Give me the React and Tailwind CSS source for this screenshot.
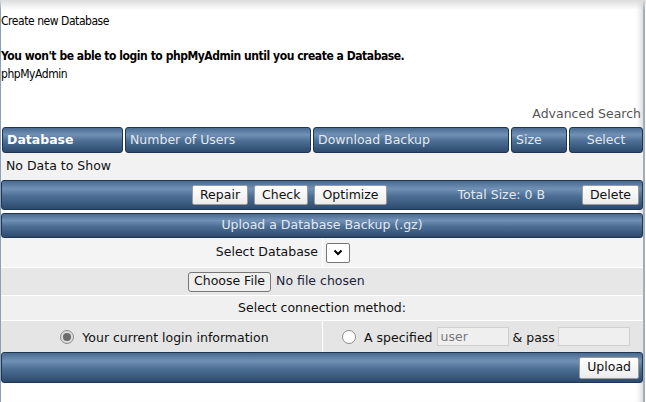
import React from 'react';

// blue bar gradient used by headers and action bars
const bar =
  'bg-[linear-gradient(to_bottom,#4a6b91_0%,#7090b4_28%,#4d6e94_55%,#2c4a6d_100%)] border border-[#1f3552] rounded-[3px]';

const Btn = ({ children, className = '' }) => (
  <button
    className={`h-[20px] px-[7px] border border-[#9a9a9a] rounded-[2px] bg-[linear-gradient(to_bottom,#ffffff,#ececec)] text-[#111] leading-none ${className}`}
  >
    {children}
  </button>
);

const Radio = ({ checked }) => (
  <span
    className={`inline-flex items-center justify-center w-[14px] h-[14px] rounded-full border ${
      checked ? 'border-[#8c8c8c] bg-[#dcdcdc]' : 'border-[#8c8c8c] bg-white'
    }`}
  >
    {checked && <span className="w-[8px] h-[8px] rounded-full bg-[#6b6b6b]" />}
  </span>
);

const headers = [
  { label: 'Database', w: 'w-[121px]', bold: true },
  { label: 'Number of Users', w: 'w-[186px]' },
  { label: 'Download Backup', w: 'w-[196px]' },
  { label: 'Size', w: 'w-[56px]' },
  { label: 'Select', w: 'w-[74px]', center: true },
];

const App = () => {
  return (
    <div className="relative w-[646px] h-[402px] bg-white overflow-hidden font-['DejaVu_Sans',sans-serif] text-[12.5px] text-[#111]">
      <div className="w-[645px] h-full border-l border-[#8aa0bb] border-r-2 border-r-[#a3adba] shadow-[inset_-7px_0_6px_-5px_rgba(0,0,0,0.18)]">
        {/* intro text */}
        <div className="pt-[12px] font-['DejaVu_Sans_Condensed','DejaVu_Sans',sans-serif] text-[12px] tracking-[-0.45px] leading-[18px] text-black">
          <div>Create new Database</div>
          <div className="h-[17px]" />
          <div className="font-bold">You won't be able to login to phpMyAdmin until you create a Database.</div>
          <div>phpMyAdmin</div>
        </div>

        <div className="mt-[22px] mb-[4px] pr-[2px] text-right leading-[18px] text-[#555]">Advanced Search</div>

        {/* database table */}
        <div className="flex gap-[2px] pl-[1px]">
          {headers.map((h) => (
            <div
              key={h.label}
              className={`${h.w} h-[26px] ${bar} flex items-center px-[4px] ${
                h.center ? 'justify-center' : ''
              } ${h.bold ? 'font-bold text-white' : 'text-[#e3e9f1]'}`}
            >
              {h.label}
            </div>
          ))}
        </div>
        <div className="h-[27px] bg-[#f2f2f2] flex items-center px-[5px]">No Data to Show</div>
        <div className={`h-[30px] ${bar} flex items-center`}>
          <div className="ml-[190px] flex gap-[6px]">
            <Btn>Repair</Btn>
            <Btn>Check</Btn>
            <Btn>Optimize</Btn>
          </div>
          <span className="ml-[71px] text-[#e3e9f1]">Total Size: 0 B</span>
          <Btn className="ml-auto mr-[3px]">Delete</Btn>
        </div>

        {/* upload */}
        <div className={`mt-[3px] h-[25px] ${bar} flex items-center justify-center text-[#e3e9f1]`}>
          Upload a Database Backup (.gz)
        </div>
        <div className="flex h-[29px] bg-[#f4f4f4]">
          <div className="w-[322px] border-r border-white flex items-center justify-end pr-[4px]">Select Database</div>
          <div className="flex items-center pl-[3px]">
            <div className="w-[24px] h-[20px] border border-[#767676] rounded-[2px] bg-white flex items-center justify-center">
              <svg width="10" height="7" viewBox="0 0 10 7">
                <path d="M1.5 1.5 L5 5 L8.5 1.5" fill="none" stroke="#000" strokeWidth="2" />
              </svg>
            </div>
          </div>
        </div>
        <div className="h-[28px] bg-[#e7e7e7] border-t border-white flex items-center justify-center">
          <div className="w-[268px] flex items-center">
            <button className="h-[20px] px-[5px] border border-[#767676] rounded-[3px] bg-[#efefef] leading-none text-[#111]">
              Choose File
            </button>
            <span className="ml-[5px] text-[#1c1c3a]">No file chosen</span>
          </div>
        </div>
        <div className="h-[25px] bg-[#f0f0f0] border-t border-white flex items-center justify-center">
          Select connection method:
        </div>
        <div className="flex h-[32px] bg-[#e5e5e5] border-t border-white">
          <div className="w-[322px] border-r border-white flex items-center justify-center gap-[8px] pl-[6px]">
            <Radio checked />
            <span className="mt-[3px]">Your current login information</span>
          </div>
          <div className="flex-1 flex items-center pl-[19px]">
            <Radio />
            <span className="ml-[8px] mt-[3px]">A specified</span>
            <input
              readOnly
              value="user"
              className="ml-[4px] w-[72px] h-[19px] border border-[#cfcfcf] bg-[#efefef] px-[3px] text-[#777] text-[12.5px] outline-none"
            />
            <span className="ml-[4px] mt-[3px]">&amp; pass</span>
            <input
              readOnly
              className="ml-[3px] w-[72px] h-[19px] border border-[#cfcfcf] bg-[#efefef] outline-none"
            />
          </div>
        </div>
        <div className={`h-[31px] ${bar} flex items-center justify-end`}>
          <Btn className="h-[22px] px-[6px] mr-[3px]">Upload</Btn>
        </div>
      </div>

      {/* top edge shadow */}
      <div className="absolute inset-x-0 top-0 h-[10px] bg-gradient-to-b from-[#dcdcdc] to-transparent" />
    </div>
  );
};

export default App;
